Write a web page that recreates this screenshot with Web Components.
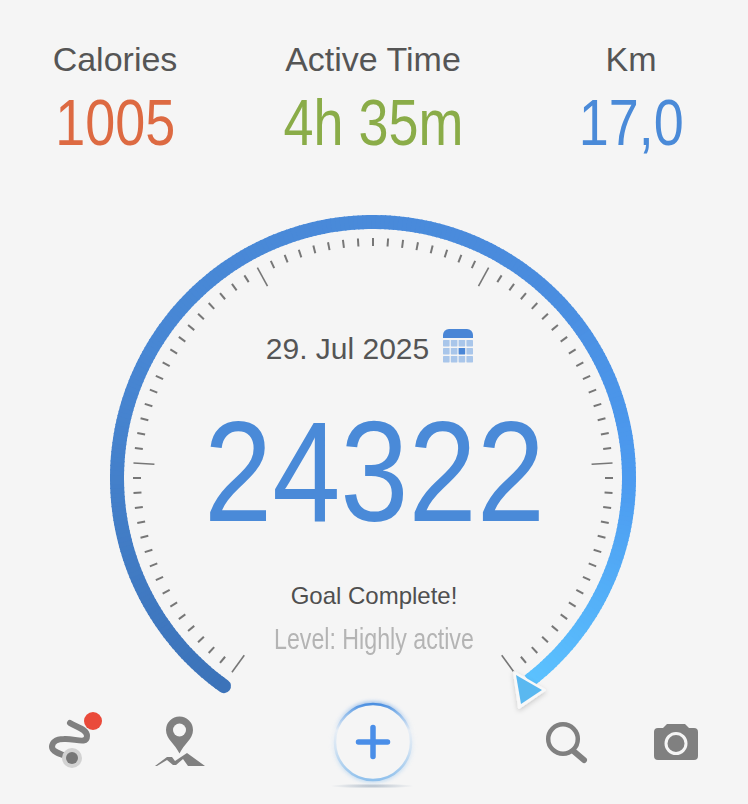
<!DOCTYPE html>
<html>
<head>
<meta charset="utf-8">
<style>
  html, body { margin:0; height:100%; background:#f5f5f5; overflow:hidden; }
  body { font-family:"Liberation Sans", Arial, sans-serif; }
</style>
</head>
<body>
<activity-screen>
  <stat-row slot="stats">
    <stat-item label="Calories" value="1005" color="#dd6a42" style="--w:230px"></stat-item>
    <stat-item label="Active Time" value="4h 35m" color="#8aac48" style="--w:286px"></stat-item>
    <stat-item label="Km" value="17,0" color="#4a8ad8" style="--w:230px"></stat-item>
  </stat-row>
  <step-gauge slot="gauge" date="29. Jul 2025" steps="24322" note="Goal Complete!" level="Level: Highly active"></step-gauge>
  <tool-bar slot="tools"></tool-bar>
</activity-screen>

<script>
class ActivityScreen extends HTMLElement {
  constructor() {
    super();
    this.attachShadow({ mode: 'open' });
    this.shadowRoot.innerHTML = `
      <style>
        :host { display:flex; flex-direction:column; width:748px; height:804px; color:#555; }
      </style>
      <slot name="stats"></slot>
      <slot name="gauge"></slot>
      <slot name="tools"></slot>
    `;
  }
}

class StatRow extends HTMLElement {
  constructor() {
    super();
    this.attachShadow({ mode: 'open' });
    this.shadowRoot.innerHTML = `
      <style>
        :host { display:flex; height:200px; padding-top:40px; box-sizing:border-box; }
      </style>
      <slot></slot>
    `;
  }
}

class StatItem extends HTMLElement {
  constructor() {
    super();
    this.attachShadow({ mode: 'open' });
    this.shadowRoot.innerHTML = `
      <style>
        :host { display:flex; flex-direction:column; align-items:center; width:var(--w); }
        .label { font-size:34px; line-height:38px; color:#555; }
        .value { font-size:65px; line-height:70px; transform:scaleX(.83); margin-top:10px; }
      </style>
      <div class="label"></div>
      <div class="value"></div>
    `;
  }

  connectedCallback() {
    this.shadowRoot.querySelector('.label').textContent = this.getAttribute('label');
    const v = this.shadowRoot.querySelector('.value');
    v.textContent = this.getAttribute('value');
    v.style.color = this.getAttribute('color');
  }
}

class StepGauge extends HTMLElement {
  constructor() {
    super();
    this.attachShadow({ mode: 'open' });
    this.shadowRoot.innerHTML = `
      <style>
        :host { display:grid; height:510px; position:relative; }
        svg { grid-area:1/1; width:748px; height:510px; overflow:visible; }
        .center { grid-area:1/1; display:flex; flex-direction:column; align-items:center; padding-top:131px; }
        .date { display:flex; align-items:center; gap:14px; font-size:30px; line-height:36px; color:#555; margin-left:-9px; }
        .date svg { margin:-3px 0 3px; }
        .steps { font-size:142px; line-height:150px; color:#4a8ad8; transform:scaleX(.863); margin-top:29.5px; }
        .note { font-size:24px; line-height:28px; color:#4f4f4f; margin-top:35px; }
        .level { font-size:29px; line-height:30px; color:#b4b4b4; transform:scaleX(.8); margin-top:14.5px; }
      </style>
      <svg id="dial" viewBox="0 200 748 510"></svg>
      <div class="center">
        <div class="date"><span id="date"></span>
          <svg style="width:30px;height:34px" viewBox="0 0 30 34">
            <path d="M0 9V6a6 6 0 0 1 6-6h18a6 6 0 0 1 6 6v3z" fill="#4a86d6"/>
            <g id="cal"></g>
          </svg>
        </div>
        <div class="steps" id="steps"></div>
        <div class="note" id="note"></div>
        <div class="level" id="level"></div>
      </div>
    `;
  }

  connectedCallback() {
    const root = this.shadowRoot;
    root.getElementById('date').textContent = this.getAttribute('date');
    root.getElementById('steps').textContent = this.getAttribute('steps');
    root.getElementById('note').textContent = this.getAttribute('note');
    root.getElementById('level').textContent = this.getAttribute('level');
    root.getElementById('dial').innerHTML = this._ticks() + this._arc() + this._arrow();
    let cells = '';
    for (let r = 0; r < 3; r++) {
      for (let c = 0; c < 4; c++) {
        const hot = r === 1 && c === 2;
        cells += `<rect x="${c * 7.8}" y="${11 + r * 8}" width="6.6" height="6.4" rx=".6" fill="${hot ? '#4a86d6' : '#a9c6ea'}"/>`;
      }
    }
    root.getElementById('cal').innerHTML = cells;
  }

  _point(deg, r) {
    const a = deg * Math.PI / 180;
    return [373 + r * Math.sin(a), 478 - r * Math.cos(a)];
  }

  _ticks() {
    let out = '';
    for (let i = 0; i <= 80; i++) {
      const deg = -144 + i * 3.6;
      const major = i % 16 === 0;
      const [x1, y1] = this._point(deg, 240);
      const [x2, y2] = this._point(deg, major ? 219 : 232);
      out += `<line x1="${x1}" y1="${y1}" x2="${x2}" y2="${y2}" stroke="#777" stroke-width="${major ? 1.6 : 2}"/>`;
    }
    return out;
  }

  // the ring changes colour along its length, so it is drawn in short pieces
  _arc() {
    const stops = [[-144, [60, 115, 185]], [-60, [72, 135, 212]], [40, [74, 140, 222]], [90, [76, 155, 240]], [143, [92, 195, 255]]];
    const colorAt = d => {
      for (let i = 1; i < stops.length; i++) {
        if (d <= stops[i][0]) {
          const t = (d - stops[i - 1][0]) / (stops[i][0] - stops[i - 1][0]);
          return stops[i][1].map((v, k) => Math.round(stops[i - 1][1][k] + (v - stops[i - 1][1][k]) * t));
        }
      }
      return stops[stops.length - 1][1];
    };
    let out = '';
    for (let d = -144.4; d < 142; d += 1) {
      const [x1, y1] = this._point(d, 256);
      const [x2, y2] = this._point(Math.min(d + 1.3, 142.5), 256);
      const c = colorAt(d);
      const cap = d === -144.4 ? 'round' : 'butt';
      out += `<path d="M${x1} ${y1}L${x2} ${y2}" stroke="rgb(${c.join(',')})" stroke-width="14" stroke-linecap="${cap}" fill="none"/>`;
    }
    return out;
  }

  _arrow() {
    return `
      <defs><filter id="sh" x="-40%" y="-40%" width="180%" height="180%"><feDropShadow dx="0" dy="2" stdDeviation="2.5" flood-color="#000" flood-opacity=".18"/></filter></defs>
      <path d="M514 672L545 690L519 708Z" fill="#f8f8f8" stroke="#f8f8f8" stroke-width="2" stroke-linejoin="round" filter="url(#sh)"/>
      <path d="M516 675L542 690L521 704Z" fill="#5ab8f0"/>`;
  }
}

class ToolBar extends HTMLElement {
  constructor() {
    super();
    this.attachShadow({ mode: 'open' });
    this.shadowRoot.innerHTML = `
      <style>
        :host { display:block; position:relative; height:94px; }
        svg { display:block; overflow:visible; }
      </style>
      <svg width="748" height="94" viewBox="0 710 748 94">
        <defs>
          <linearGradient id="ring" x1="0" y1="0" x2="0" y2="1">
            <stop offset="0" stop-color="#4a8ee0"/>
            <stop offset=".12" stop-color="#8ab8ea"/>
            <stop offset=".35" stop-color="#e8eef5"/>
            <stop offset=".6" stop-color="#d2e3f3"/>
            <stop offset="1" stop-color="#8fc0ec"/>
          </linearGradient>
          <radialGradient id="floor"><stop offset="0" stop-color="#b4bfcb"/><stop offset="1" stop-color="#f5f5f5"/></radialGradient>
          <filter id="soft" x="-20%" y="-20%" width="140%" height="140%"><feGaussianBlur stdDeviation="2"/></filter>
        </defs>
        <!-- route -->
        <path d="M70 723C76 727 87 729 87 736C87 745 74 738 64 739C55 739 52 743 52 747C52 752 60 754 72 758" fill="none" stroke="#808080" stroke-width="6" stroke-linecap="round"/>
        <circle cx="72" cy="758" r="10" fill="#d2d2d2"/>
        <circle cx="72" cy="758" r="6" fill="#777"/>
        <circle cx="93" cy="721" r="9" fill="#ea4a3a"/>
        <!-- pin over hills -->
        <path d="M179.500 716.500a13.500 13.500 0 0 1 13.500 13.500c0 9-9 14-13.500 23.500c-4.500-9.500-13.500-14.500-13.500-23.500a13.500 13.500 0 0 1 13.500-13.500z" fill="#808080"/>
        <circle cx="179.500" cy="730" r="6.500" fill="#f5f5f5"/>
        <path d="M155 766L167 757L172 757L175 761L187 753L205 766H188L183 759L176 765L173 765L167 760L157 766Z" fill="#808080"/>
        <!-- add -->
        <ellipse cx="372" cy="786" rx="42" ry="2.500" fill="url(#floor)"/>
        <circle cx="373" cy="742" r="38" fill="none" stroke="url(#ring)" stroke-width="4" filter="url(#soft)" opacity=".7"/>
        <circle cx="373" cy="742" r="38" fill="#f5f5f5" stroke="url(#ring)" stroke-width="2.500"/>
        <path d="M358.500 742H387.500M373 727.500V756.500" stroke="#4a8ee8" stroke-width="5.500" stroke-linecap="round"/>
        <!-- search -->
        <circle cx="563" cy="739" r="14.800" fill="none" stroke="#808080" stroke-width="4.500"/>
        <path d="M574 751.500L584 760" stroke="#808080" stroke-width="6" stroke-linecap="round"/>
        <!-- camera -->
        <path d="M658 728H663L667 724H685L689 728H694a4 4 0 0 1 4 4V756a4 4 0 0 1-4 4H658a4 4 0 0 1-4-4V732a4 4 0 0 1 4-4z" fill="#808080"/>
        <circle cx="676" cy="743.500" r="10" fill="none" stroke="#f5f5f5" stroke-width="3"/>
      </svg>
    `;
  }
}

customElements.define('activity-screen', ActivityScreen);
customElements.define('stat-row', StatRow);
customElements.define('stat-item', StatItem);
customElements.define('step-gauge', StepGauge);
customElements.define('tool-bar', ToolBar);
</script>
</body>
</html>
